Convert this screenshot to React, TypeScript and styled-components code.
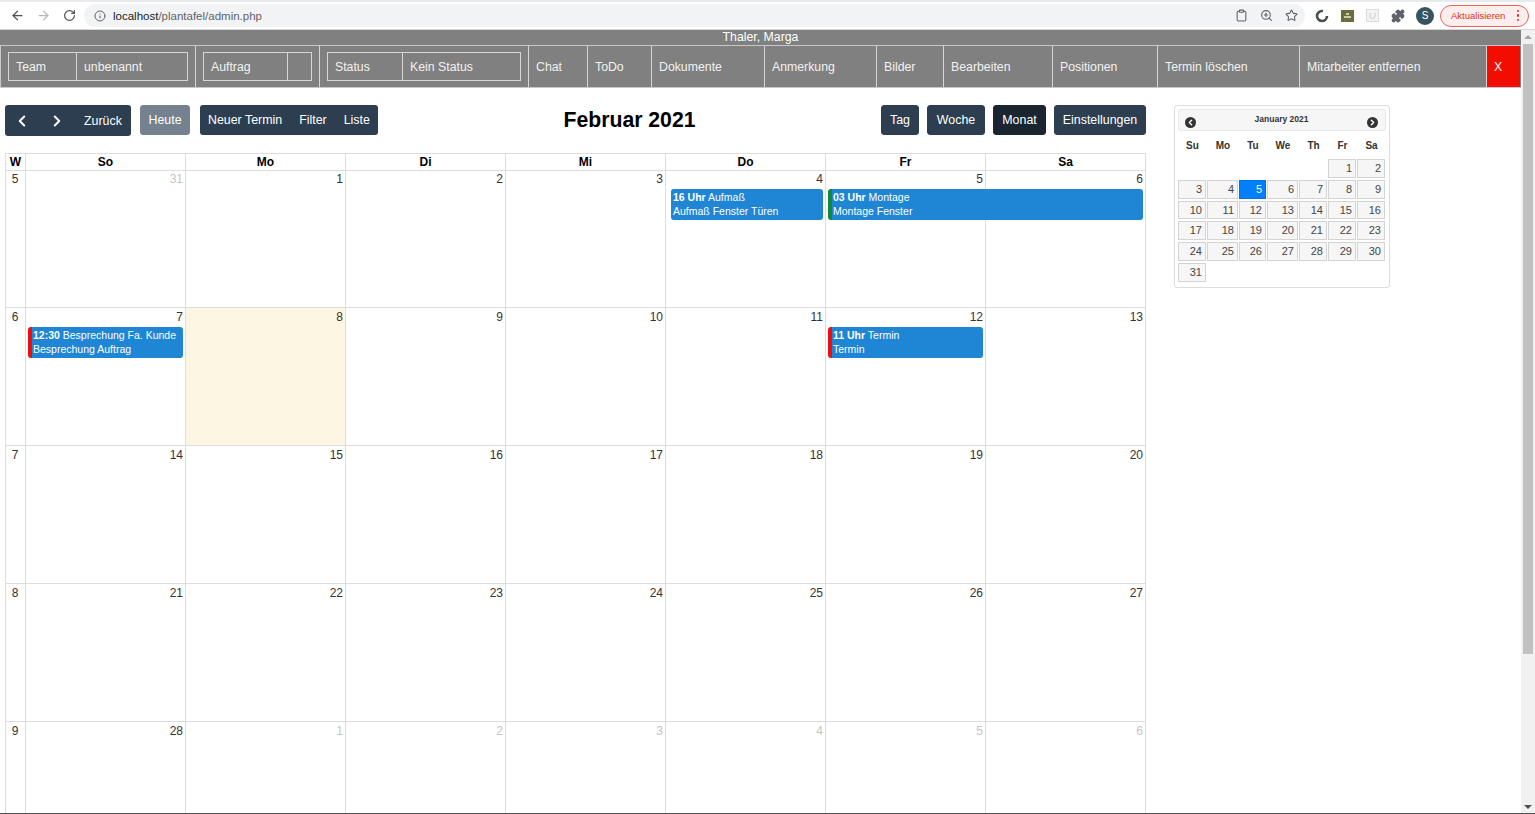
import React from "react";
import styled, { createGlobalStyle } from "styled-components";
import { ArrowLeft, ArrowRight, RotateCw, Info, Clipboard, ZoomIn, Star, Puzzle, ChevronLeft, ChevronRight } from "lucide-react";

const Global = createGlobalStyle`
  html, body { margin: 0; padding: 0; height: 100%; overflow: hidden; background: #fff; }
  body { font-family: "Liberation Sans", Arial, sans-serif; }
  * { box-sizing: border-box; }
`;

const Page = styled.div`
  width: 1535px; height: 814px; display: flex; flex-direction: column; overflow: hidden; position: relative;
`;
const BrowserBar = styled.div`
  height: 30px; flex: none; display: flex; align-items: center; background: #fff;
  border-top: 2px solid #e8eaed; border-bottom: 1px solid #d5d6d8; padding: 0 6px 0 10px;
`;
const NavIcon = styled.span<{ $off?: boolean; $w?: number }>`
  width: ${p => p.$w ?? 26}px; display: flex; justify-content: center; color: ${p => (p.$off ? "#b4b7bb" : "#4d5156")};
`;
const Omni = styled.div`
  margin-left: 8px; width: 1221px; flex: none; height: 23px; border-radius: 12px; background: #f1f3f4;
  display: flex; align-items: center; padding: 0 7px 0 10px; font-size: 11.5px; color: #5f6368;
`;
const Host = styled.span` color: #202124; margin-left: 7px; `;
const Spacer = styled.div` flex: 1; `;
const ToolIcons = styled.div` display: flex; align-items: center; gap: 12px; color: #5f6368; `;
const ExtIcons = styled.div` display: flex; align-items: center; margin-left: 10px; gap: 12px; color: #5f6368; `;
const Avatar = styled.div`
  width: 18px; height: 18px; margin-left: 11px; flex: none; border-radius: 50%; background: #37545f; color: #fff; font-size: 10px;
  display: flex; align-items: center; justify-content: center;
`;
const Update = styled.div`
  margin-left: 6px; width: 89px; flex: none; height: 22px; border-radius: 11px; border: 1px solid #e8615a; background: #fdeeed;
  color: #d93025; font-size: 9.5px; display: flex; align-items: center; justify-content: space-between; padding: 0 9px 0 10px;
`;
const Dots = styled.span`
  display: flex; flex-direction: column; gap: 2px;
  i { width: 2.5px; height: 2.5px; border-radius: 50%; background: #d93025; display: block; }
`;

const Body = styled.div` flex: 1; display: flex; min-height: 0; `;
const Content = styled.div` width: 1521px; flex: none; display: flex; flex-direction: column; `;
const Scrollbar = styled.div`
  width: 14px; flex: none; background: #f1f1f1; display: flex; flex-direction: column; align-items: center;
`;
const Arrow = styled.div<{ $down?: boolean }>`
  height: 14px; flex: none; display: flex; align-items: center; justify-content: center;
  &::after { content: ""; border-left: 4px solid transparent; border-right: 4px solid transparent;
    ${p => (p.$down ? "border-top: 4px solid #505050;" : "border-bottom: 4px solid #a3a3a3;")} }
`;
const Thumb = styled.div` width: 10px; height: 610px; background: #c1c1c1; flex: none; `;
const Track = styled.div` flex: 1; `;

const TitleBar = styled.div`
  height: 15px; flex: none; background: #808080; color: #fff; font-size: 12.3px; line-height: 15px; text-align: center;
`;
const Nav = styled.nav`
  height: 43px; flex: none; display: flex; background: #808080; color: #f2f2f2; font-size: 12.3px;
  border-top: 1px solid #c8c8c8; border-bottom: 1px solid #c8c8c8; border-left: 1px solid #c8c8c8;
`;
const NavCell = styled.div<{ $w: number }>`
  width: ${p => p.$w}px; flex: none; display: flex; align-items: center; padding: 0 7px;
  border-right: 1px solid #d6d6d6;
`;
const NavBox = styled.div`
  display: flex; width: 100%; height: 29px; border: 1px solid #d6d6d6;
`;
const NavBoxPart = styled.div<{ $w?: number }>`
  ${p => (p.$w ? `width: ${p.$w}px; flex: none; border-right: 1px solid #d6d6d6;` : "flex: 1;")}
  display: flex; align-items: center; padding-left: 7px;
`;
const CloseCell = styled.div`
  width: 33px; flex: none; background: #f20d00; color: #fff; display: flex; align-items: center; padding-left: 7px;
`;

const Main = styled.div` display: flex; padding: 17px 0 0 5px; gap: 28px; align-items: flex-start; `;
const CalendarCol = styled.div` width: 1141px; flex: none; `;
const Toolbar = styled.div` display: flex; align-items: flex-start; height: 31px; margin-bottom: 17px; `;
const ToolGroup = styled.div<{ $gap?: number; $left?: number }>`
  display: flex; align-items: center; gap: ${p => p.$gap ?? 0}px; margin-left: ${p => p.$left ?? 0}px;
`;
const Btn = styled.div<{ $bg?: string; $w?: number }>`
  height: 30px; ${p => (p.$w ? `width: ${p.$w}px;` : "")} display: flex; align-items: center; justify-content: center;
  background: ${p => p.$bg ?? "#2c3e50"}; color: #fff; font-size: 12.4px; border-radius: 3px;
  border: 1px solid ${p => p.$bg ?? "#2c3e50"};
`;
const BtnBar = styled.div<{ $w: number; $h?: number }>`
  width: ${p => p.$w}px; height: ${p => p.$h ?? 30}px; background: #2c3e50; color: #fff; font-size: 12.4px; border-radius: 3px;
  display: flex; align-items: center; padding: 0 8px; white-space: nowrap;
`;
const BtnText = styled.span<{ $left?: number }>` margin-left: ${p => p.$left ?? 0}px; `;
const Heading = styled.h2`
  margin: 0; width: 503px; text-align: center; font-size: 21.2px; font-weight: 700; color: #000; line-height: 30px;
`;

const Grid = styled.div` border-top: 1px solid #ddd; border-right: 1px solid #ddd; `;
const COLS = "20px repeat(7, 160px)";
const HeadRow = styled.div`
  display: grid; grid-template-columns: ${COLS}; height: 16px; font-size: 12px; font-weight: 700; color: #000;
  line-height: 16px; text-align: center;
`;
const HeadCell = styled.div` border-left: 1px solid #ddd; border-bottom: 1px solid #ddd; `;
const WeekRow = styled.div`
  display: grid; grid-template-columns: ${COLS}; grid-template-rows: 138px;
`;
const WeekNo = styled.div`
  grid-row: 1; border-left: 1px solid #ddd; border-bottom: 1px solid #ddd; font-size: 12px; color: #333;
  text-align: center; padding-top: 2px; line-height: 14px; padding-right: 1px;
`;
const DayCell = styled.div<{ $col: number; $dim?: boolean; $today?: boolean }>`
  grid-row: 1; grid-column: ${p => p.$col}; border-left: 1px solid #ddd; border-bottom: 1px solid #ddd;
  background: ${p => (p.$today ? "#fcf6e3" : "transparent")}; color: ${p => (p.$dim ? "#c4c4c4" : "#333")};
  font-size: 12px; line-height: 14px; text-align: right; padding: 2px 2px 0 0;
`;
const Event = styled.div<{ $col: number; $span?: number; $mark?: string }>`
  grid-row: 1; grid-column: ${p => p.$col} / span ${p => p.$span ?? 1}; align-self: start; z-index: 1;
  margin: 19px 2px 0 ${p => (p.$mark ? 3 : 6)}px; height: 31px; background: #1e86d4; color: #fff; border-radius: 3px;
  border-left: ${p => (p.$mark ? `4px solid ${p.$mark}` : "1px solid #1e86d4")};
  font-size: 10.5px; line-height: 14.4px; padding: 0.5px 0 0 1px; white-space: nowrap; overflow: hidden;
`;
const EvTitle = styled.div` b { font-weight: 700; } `;

const Picker = styled.div`
  width: 216px; height: 183px; margin-top: 0; flex: none; border: 1px solid #ddd; border-radius: 3px; padding: 3px;
  color: #333;
`;
const PickerHead = styled.div`
  height: 22px; background: #f6f6f6; border: 1px solid #e8e8e8; border-radius: 3px; display: flex; justify-content: space-between;
  padding: 2px 7px 0 6px; font-size: 8.5px; font-weight: 700; color: #333; line-height: 14px;
`;
const Round = styled.span`
  width: 11px; height: 11px; margin-top: 5px; border-radius: 50%; background: #333; color: #fff; display: flex; align-items: center; justify-content: center;
`;
const PICKER_COLS = "29px 32px 28px 32px 29px 29px 29px";
const PickerDays = styled.div`
  display: grid; grid-template-columns: ${PICKER_COLS};
  font-size: 10px; font-weight: 700; color: #333; text-align: center; height: 28px; line-height: 30px;
`;
const PickerGrid = styled.div`
  display: grid; grid-template-columns: ${PICKER_COLS}; grid-auto-rows: 20.8px;
`;
const PD = styled.div<{ $col?: number; $on?: boolean }>`
  ${p => (p.$col ? `grid-column: ${p.$col};` : "")}
  margin: 0 1px 2px 0; border: 1px solid ${p => (p.$on ? "#0070e8" : "#d3d3d3")};
  background: ${p => (p.$on ? "#007fff" : "#f6f6f6")}; color: ${p => (p.$on ? "#fff" : "#454545")};
  font-size: 11px; text-align: right; padding-right: 3px; line-height: 17px;
`;
const Bottom = styled.div`
  position: absolute; left: 0; right: 0; bottom: 0; height: 1px; background: #555;
`;

const weeks: { no: number; days: { d: number; dim?: boolean; today?: boolean }[] }[] = [
  { no: 5, days: [{ d: 31, dim: true }, { d: 1 }, { d: 2 }, { d: 3 }, { d: 4 }, { d: 5 }, { d: 6 }] },
  { no: 6, days: [{ d: 7 }, { d: 8, today: true }, { d: 9 }, { d: 10 }, { d: 11 }, { d: 12 }, { d: 13 }] },
  { no: 7, days: [14, 15, 16, 17, 18, 19, 20].map(d => ({ d })) },
  { no: 8, days: [21, 22, 23, 24, 25, 26, 27].map(d => ({ d })) },
  { no: 9, days: [{ d: 28 }, ...[1, 2, 3, 4, 5, 6].map(d => ({ d, dim: true }))] },
];

const events = [
  { week: 5, col: 6, time: "16 Uhr", title: "Aufmaß", sub: "Aufmaß Fenster Türen" },
  { week: 5, col: 7, span: 2, mark: "#0a8a3a", time: "03 Uhr", title: "Montage", sub: "Montage Fenster" },
  { week: 6, col: 2, mark: "#f20d0d", time: "12:30", title: "Besprechung Fa. Kunde", sub: "Besprechung Auftrag" },
  { week: 6, col: 7, mark: "#f20d0d", time: "11 Uhr", title: "Termin", sub: "Termin" },
];

const pickerWeeks: number[] = Array.from({ length: 29 }, (_, i) => i + 3);

export default function App() {
  return (
    <Page>
      <Global />
      <BrowserBar>
        <NavIcon $w={15}><ArrowLeft size={15} /></NavIcon>
        <NavIcon $off $w={37}><ArrowRight size={15} /></NavIcon>
        <NavIcon $w={14}><RotateCw size={13} strokeWidth={2.2} /></NavIcon>
        <Omni>
          <Info size={12} />
          <Host>localhost</Host>/plantafel/admin.php
          <Spacer />
          <ToolIcons>
            <Clipboard size={13} />
            <ZoomIn size={13} />
            <Star size={13} />
          </ToolIcons>
        </Omni>
        <ExtIcons>
          <svg width="14" height="14" viewBox="0 0 14 14"><circle cx="7" cy="7" r="5" fill="none" stroke="#4a4f52" strokeWidth="2.6" strokeDasharray="24 8" /></svg>
          <svg width="13" height="12" viewBox="0 0 13 12"><rect width="13" height="12" fill="#6b6d3f" /><rect x="3" y="6" width="7" height="2" fill="#c9cba8" /><rect x="5" y="3" width="3" height="2" fill="#c9cba8" /></svg>
          <svg width="13" height="13" viewBox="0 0 13 13"><rect x=".5" y=".5" width="12" height="12" fill="#f1f3f4" stroke="#d8dadd" /><path d="M4 4v3a2.5 2.5 0 005 0V4" fill="none" stroke="#c8cacd" /></svg>
          <Puzzle size={14} fill="#5f6368" />
        </ExtIcons>
        <Avatar>S</Avatar>
        <Update>Aktualisieren<Dots><i /><i /><i /></Dots></Update>
      </BrowserBar>
      <Body>
        <Content>
          <TitleBar>Thaler, Marga</TitleBar>
          <Nav>
            <NavCell $w={195}><NavBox><NavBoxPart $w={68}>Team</NavBoxPart><NavBoxPart>unbenannt</NavBoxPart></NavBox></NavCell>
            <NavCell $w={124}><NavBox><NavBoxPart $w={84}>Auftrag</NavBoxPart><NavBoxPart /></NavBox></NavCell>
            <NavCell $w={209}><NavBox><NavBoxPart $w={75}>Status</NavBoxPart><NavBoxPart>Kein Status</NavBoxPart></NavBox></NavCell>
            <NavCell $w={59}>Chat</NavCell>
            <NavCell $w={64}>ToDo</NavCell>
            <NavCell $w={113}>Dokumente</NavCell>
            <NavCell $w={112}>Anmerkung</NavCell>
            <NavCell $w={67}>Bilder</NavCell>
            <NavCell $w={109}>Bearbeiten</NavCell>
            <NavCell $w={105}>Positionen</NavCell>
            <NavCell $w={142}>Termin löschen</NavCell>
            <NavCell $w={187}>Mitarbeiter entfernen</NavCell>
            <CloseCell>X</CloseCell>
          </Nav>
          <Main>
            <CalendarCol>
              <Toolbar>
                <BtnBar $w={126} $h={31}>
                  <ChevronLeft size={18} strokeWidth={2.6} />
                  <BtnText $left={17}><ChevronRight size={18} strokeWidth={2.6} style={{ display: "block" }} /></BtnText>
                  <BtnText $left={18}>Zurück</BtnText>
                </BtnBar>
                <ToolGroup $left={9}><Btn $bg="#74818f" $w={50}>Heute</Btn></ToolGroup>
                <ToolGroup $left={10}>
                  <BtnBar $w={178}>
                    <BtnText>Neuer Termin</BtnText>
                    <BtnText $left={17}>Filter</BtnText>
                    <BtnText $left={17}>Liste</BtnText>
                  </BtnBar>
                </ToolGroup>
                <Heading>Februar 2021</Heading>
                <ToolGroup $gap={8}>
                  <Btn $w={38}>Tag</Btn>
                  <Btn $w={58}>Woche</Btn>
                  <Btn $w={53} $bg="#1a252f">Monat</Btn>
                  <Btn $w={92}>Einstellungen</Btn>
                </ToolGroup>
              </Toolbar>
              <Grid>
                <HeadRow>
                  {["W", "So", "Mo", "Di", "Mi", "Do", "Fr", "Sa"].map(h => <HeadCell key={h}>{h}</HeadCell>)}
                </HeadRow>
                {weeks.map(w => (
                  <WeekRow key={w.no}>
                    <WeekNo>{w.no}</WeekNo>
                    {w.days.map((d, i) => (
                      <DayCell key={i} $col={i + 2} $dim={d.dim} $today={d.today}>{d.d}</DayCell>
                    ))}
                    {events.filter(e => e.week === w.no).map(e => (
                      <Event key={e.time} $col={e.col} $span={e.span} $mark={e.mark}>
                        <EvTitle><b>{e.time}</b> {e.title}</EvTitle>
                        <div>{e.sub}</div>
                      </Event>
                    ))}
                  </WeekRow>
                ))}
              </Grid>
            </CalendarCol>
            <Picker>
              <PickerHead>
                <Round><ChevronLeft size={9} strokeWidth={4} /></Round>
                January 2021
                <Round><ChevronRight size={9} strokeWidth={4} /></Round>
              </PickerHead>
              <PickerDays>
                {["Su", "Mo", "Tu", "We", "Th", "Fr", "Sa"].map(d => <span key={d}>{d}</span>)}
              </PickerDays>
              <PickerGrid>
                <PD $col={6}>1</PD>
                <PD>2</PD>
                {pickerWeeks.map(n => <PD key={n} $on={n === 5}>{n}</PD>)}
              </PickerGrid>
            </Picker>
          </Main>
        </Content>
        <Scrollbar>
          <Arrow />
          <Thumb />
          <Track />
          <Arrow $down />
        </Scrollbar>
      </Body>
      <Bottom />
    </Page>
  );
}
